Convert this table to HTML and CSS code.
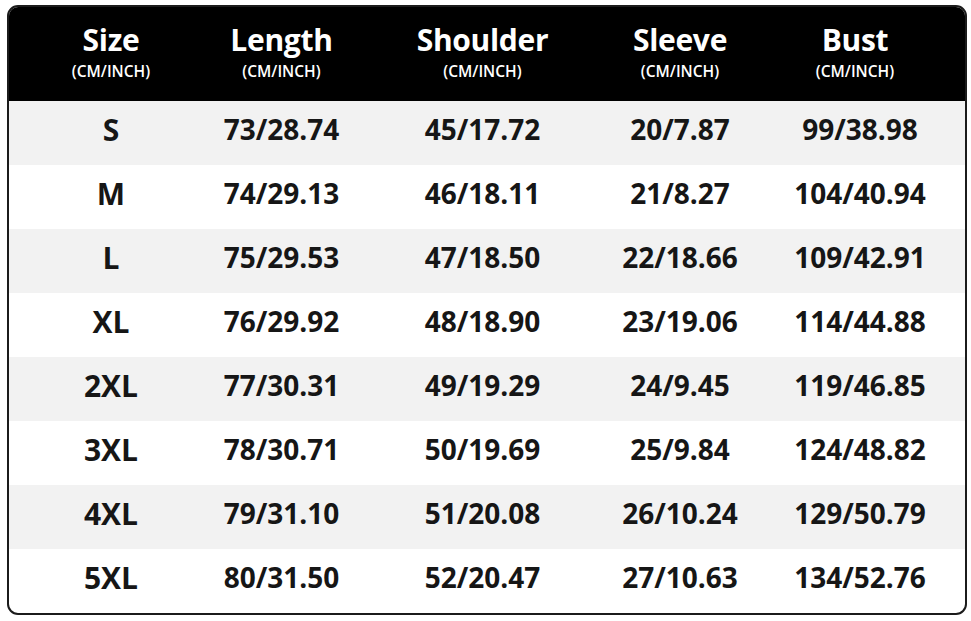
FILE: index.html
```html
<!DOCTYPE html>
<html>
<head>
<meta charset="utf-8">
<link rel="stylesheet" href="styles.css">
</head>
<body>
<div class="chart">
  <div class="row head">
    <div class="cell"><span class="title">Size</span><span class="unit">(CM/INCH)</span></div>
    <div class="cell"><span class="title">Length</span><span class="unit">(CM/INCH)</span></div>
    <div class="cell"><span class="title">Shoulder</span><span class="unit">(CM/INCH)</span></div>
    <div class="cell"><span class="title">Sleeve</span><span class="unit">(CM/INCH)</span></div>
    <div class="cell"><span class="title">Bust</span><span class="unit">(CM/INCH)</span></div>
  </div>
  <div class="row data alt"><div class="cell size">S</div><div class="cell">73/28.74</div><div class="cell">45/17.72</div><div class="cell">20/7.87</div><div class="cell">99/38.98</div></div>
  <div class="row data"><div class="cell size">M</div><div class="cell">74/29.13</div><div class="cell">46/18.11</div><div class="cell">21/8.27</div><div class="cell">104/40.94</div></div>
  <div class="row data alt"><div class="cell size">L</div><div class="cell">75/29.53</div><div class="cell">47/18.50</div><div class="cell">22/18.66</div><div class="cell">109/42.91</div></div>
  <div class="row data"><div class="cell size">XL</div><div class="cell">76/29.92</div><div class="cell">48/18.90</div><div class="cell">23/19.06</div><div class="cell">114/44.88</div></div>
  <div class="row data alt"><div class="cell size">2XL</div><div class="cell">77/30.31</div><div class="cell">49/19.29</div><div class="cell">24/9.45</div><div class="cell">119/46.85</div></div>
  <div class="row data"><div class="cell size">3XL</div><div class="cell">78/30.71</div><div class="cell">50/19.69</div><div class="cell">25/9.84</div><div class="cell">124/48.82</div></div>
  <div class="row data alt"><div class="cell size">4XL</div><div class="cell">79/31.10</div><div class="cell">51/20.08</div><div class="cell">26/10.24</div><div class="cell">129/50.79</div></div>
  <div class="row data"><div class="cell size">5XL</div><div class="cell">80/31.50</div><div class="cell">52/20.47</div><div class="cell">27/10.63</div><div class="cell">134/52.76</div></div>
</div>
</body>
</html>
```
FILE: styles.css
```css
html, body {
  margin: 0;
  padding: 0;
  background: #fff;
}
body {
  font-family: "Open Sans", "DejaVu Sans", sans-serif;
  color: #161616;
}
.chart {
  box-sizing: border-box;
  width: 960px;
  height: 610px;
  margin: 5px 0 0 7px;
  border: 2px solid #1b1b1b;
  border-radius: 11px;
  overflow: hidden;
  background: #fff;
}
.row {
  display: grid;
  grid-template-columns: 204px 137px 265px 130px 220px;
}
.head {
  background: #000;
  color: #fff;
  height: 94px;
  box-sizing: border-box;
  padding-top: 16px;
}
.head .cell {
  display: flex;
  flex-direction: column;
  align-items: center;
}
.title {
  font-size: 30px;
  font-weight: 700;
  line-height: 34px;
  letter-spacing: -0.3px;
}
.unit {
  font-size: 15.5px;
  font-weight: 600;
  line-height: 18px;
  margin-top: 5px;
}
.data {
  height: 64px;
  box-sizing: border-box;
  padding-bottom: 8px;
  align-items: center;
}
.data.alt {
  background: #f2f2f2;
}
.data .cell {
  text-align: center;
  font-size: 28px;
  font-weight: 700;
  white-space: nowrap;
}
.data .cell:last-child {
  padding-left: 10px;
}
.data .cell.size {
  font-size: 30px;
}
```
